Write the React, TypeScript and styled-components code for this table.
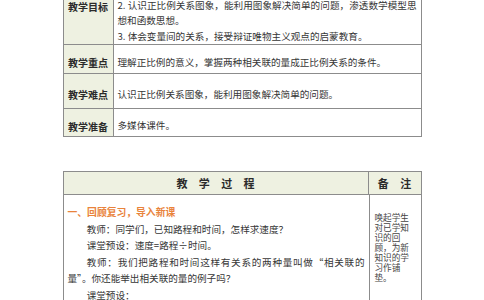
import React from 'react';
import styled, { createGlobalStyle } from 'styled-components';

const GlobalStyle = createGlobalStyle`
  html, body {
    margin: 0;
    padding: 0;
    background: #fff;
    overflow: hidden;
  }
  body {
    font-family: "Noto Sans CJK SC", "Liberation Serif", sans-serif;
    color: #363636;
  }
`;

const line = '#8c8c8c';
const tint = '#eef1e1';

const Sheet = styled.div`
  width: 359px;
  margin: -40px auto 0;
  display: flex;
  flex-direction: column;
  gap: 34px;
`;

const Table = styled.div`
  border: 1px solid ${line};
  box-sizing: border-box;
  width: 359px;
`;

const Row = styled.div<{ $h?: number }>`
  display: flex;
  box-sizing: border-box;
  ${(p) => (p.$h ? `height: ${p.$h}px;` : '')}
  & + & {
    border-top: 1px solid ${line};
  }
`;

const Label = styled.div`
  width: 50px;
  flex: none;
  box-sizing: border-box;
  background: ${tint};
  border-right: 1px solid ${line};
  display: flex;
  align-items: center;
  justify-content: center;
  padding-top: 7px;
  font-size: 10px;
  font-weight: 700;
  color: #2b2b2b;
`;

// $bottom: the first row is taller than the frame, its text sits at the bottom
const Cell = styled.div<{ $bottom?: boolean }>`
  flex: 1;
  display: flex;
  flex-direction: column;
  justify-content: ${(p) => (p.$bottom ? 'flex-end' : 'center')};
  box-sizing: border-box;
  padding: ${(p) => (p.$bottom ? '0 4px' : '7px 4px 0')};
  font-size: 9.6px;
  line-height: 15.4px;
`;

const Line = styled.div<{ $full?: boolean; $indent?: boolean }>`
  text-align: justify;
  text-align-last: ${(p) => (p.$full ? 'justify' : 'auto')};
  text-indent: ${(p) => (p.$indent ? '2em' : '0')};
`;

const HeadCell = styled.div<{ $w?: number }>`
  ${(p) => (p.$w ? `width: ${p.$w}px; flex: none;` : 'flex: 1;')}
  display: flex;
  align-items: center;
  justify-content: center;
  background: ${tint};
  font-size: 11px;
  font-weight: 700;
  color: #2b2b2b;
  letter-spacing: 11.3px;
  & + & {
    border-left: 1px solid ${line};
  }
  span {
    margin-right: -11.3px;
  }
`;

const Main = styled.div`
  flex: 1;
  box-sizing: border-box;
  padding: 9px 4px 0;
  font-size: 9.6px;
  line-height: 16.5px;
  border-right: 1px solid ${line};
`;

const Section = styled.div`
  color: #e9833b;
  font-weight: 700;
  font-size: 9.8px;
`;

const Note = styled.div`
  width: 51px;
  flex: none;
  box-sizing: border-box;
  padding: 17px 0 0 5px;
`;

const NoteText = styled.div`
  width: 36px;
  font-size: 8.6px;
  line-height: 10px;
  color: #444;
`;

export default function App() {
  return (
    <>
      <GlobalStyle />
      <Sheet>
        <Table>
          <Row $h={83}>
            <Label>教学目标</Label>
            <Cell $bottom>
              <Line $full>2. 认识正比例关系图象，能利用图象解决简单的问题，渗透数学模型思</Line>
              <Line>想和函数思想。</Line>
              <Line>3. 体会变量间的关系，接受辩证唯物主义观点的启蒙教育。</Line>
            </Cell>
          </Row>
          <Row $h={29}>
            <Label>教学重点</Label>
            <Cell>
              <Line>理解正比例的意义，掌握两种相关联的量成正比例关系的条件。</Line>
            </Cell>
          </Row>
          <Row $h={35}>
            <Label>教学难点</Label>
            <Cell>
              <Line>认识正比例关系图象，能利用图象解决简单的问题。</Line>
            </Cell>
          </Row>
          <Row $h={28}>
            <Label>教学准备</Label>
            <Cell>
              <Line>多媒体课件。</Line>
            </Cell>
          </Row>
        </Table>

        <Table>
          <Row $h={22}>
            <HeadCell>
              <span>教学过程</span>
            </HeadCell>
            <HeadCell $w={52}>
              <span>备注</span>
            </HeadCell>
          </Row>
          <Row>
            <Main>
              <Section>一、回顾复习，导入新课</Section>
              <Line $indent>教师：同学们，已知路程和时间，怎样求速度？</Line>
              <Line $indent>课堂预设：速度=路程÷时间。</Line>
              <Line $indent $full>教师：我们把路程和时间这样有关系的两种量叫做“相关联的</Line>
              <Line>量”。你还能举出相关联的量的例子吗？</Line>
              <Line $indent>课堂预设：</Line>
            </Main>
            <Note>
              <NoteText>唤起学生对已学知识的回顾，为新知识的学习作铺垫。</NoteText>
            </Note>
          </Row>
        </Table>
      </Sheet>
    </>
  );
}
